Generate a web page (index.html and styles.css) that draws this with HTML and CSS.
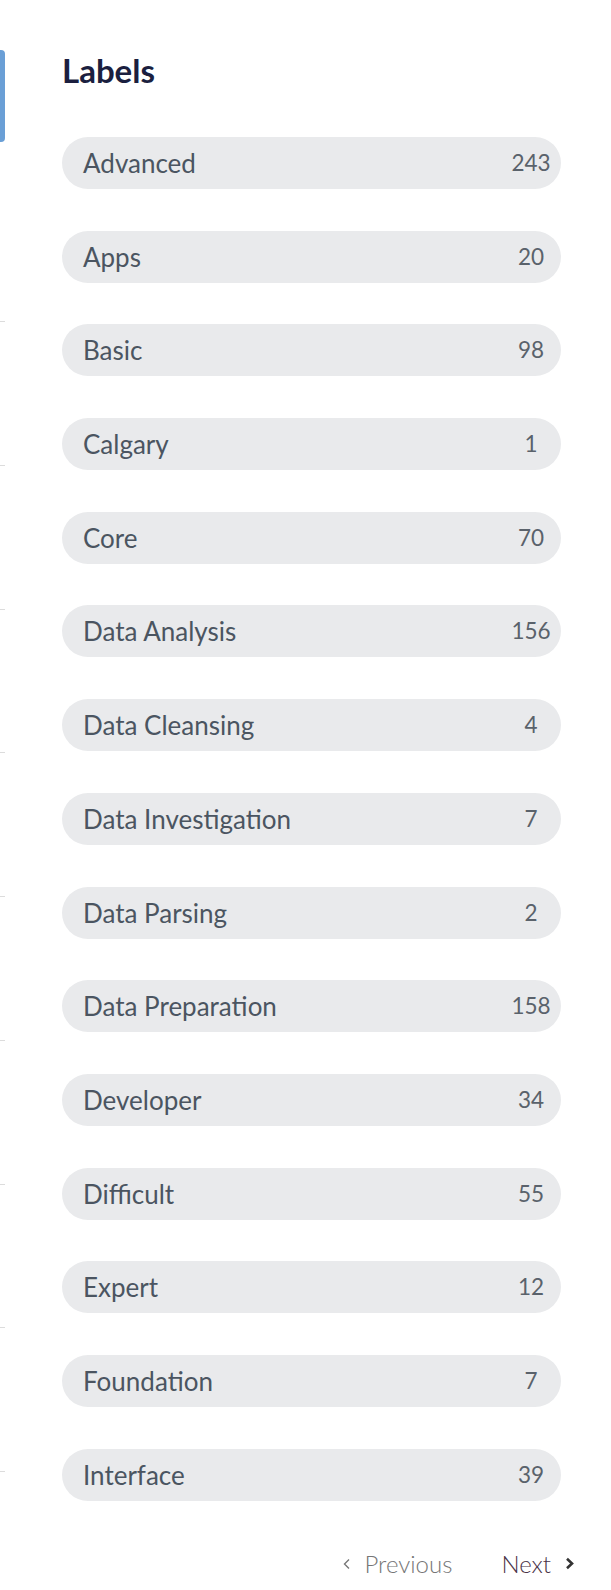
FILE: index.html
```html
<!DOCTYPE html>
<html>
<head>
<meta charset="utf-8">
<link rel="stylesheet" href="styles.css">
</head>
<body>
<div class="page">
  <div class="rail">
    <div class="rail-active"></div>
    <div class="rail-spacer"></div>
    <div class="rail-item"></div>
    <div class="rail-item"></div>
    <div class="rail-item"></div>
    <div class="rail-item"></div>
    <div class="rail-item"></div>
    <div class="rail-item"></div>
    <div class="rail-item"></div>
    <div class="rail-item"></div>
    <div class="rail-item"></div>
  </div>
  <div class="main">
    <h2 class="title">Labels</h2>
    <ul class="labels">
      <li class="pill"><span class="name">Advanced</span><span class="count">243</span></li>
      <li class="pill"><span class="name">Apps</span><span class="count">20</span></li>
      <li class="pill"><span class="name">Basic</span><span class="count">98</span></li>
      <li class="pill"><span class="name">Calgary</span><span class="count">1</span></li>
      <li class="pill"><span class="name">Core</span><span class="count">70</span></li>
      <li class="pill"><span class="name">Data Analysis</span><span class="count">156</span></li>
      <li class="pill"><span class="name">Data Cleansing</span><span class="count">4</span></li>
      <li class="pill"><span class="name">Data Investigation</span><span class="count">7</span></li>
      <li class="pill"><span class="name">Data Parsing</span><span class="count">2</span></li>
      <li class="pill"><span class="name">Data Preparation</span><span class="count">158</span></li>
      <li class="pill"><span class="name">Developer</span><span class="count">34</span></li>
      <li class="pill"><span class="name">Difficult</span><span class="count">55</span></li>
      <li class="pill"><span class="name">Expert</span><span class="count">12</span></li>
      <li class="pill"><span class="name">Foundation</span><span class="count">7</span></li>
      <li class="pill"><span class="name">Interface</span><span class="count">39</span></li>
    </ul>
    <div class="pager">
      <a class="prev">
        <svg class="chev" width="8" height="12" viewBox="0 0 8 12"><polyline points="6,1.5 1.5,6 6,10.5" fill="none" stroke="#777" stroke-width="1.4"/></svg>
        <span>Previous</span>
      </a>
      <a class="next">
        <span>Next</span>
        <svg class="chev" width="9" height="13" viewBox="0 0 9 13"><polyline points="2,1.8 7,6.5 2,11.2" fill="none" stroke="#333" stroke-width="2.6"/></svg>
      </a>
    </div>
  </div>
</div>
</body>
</html>
```
FILE: styles.css
```css
html, body {
  margin: 0;
  padding: 0;
  background: #ffffff;
}

body {
  font-family: Lato, "Noto Sans", "Liberation Sans", sans-serif;
}

.page {
  display: flex;
  align-items: flex-start;
  width: 611px;
  height: 1590px;
  overflow: hidden;
}

.rail {
  width: 5px;
  flex: none;
  display: flex;
  flex-direction: column;
}

.rail-active {
  margin-top: 50px;
  height: 92px;
  background: #6a9fd6;
  border-radius: 0 4px 4px 0;
}

.rail-spacer {
  height: 36.25px;
}

.rail-item {
  height: 142.75px;
  border-bottom: 1px solid #dcdcdc;
}

.main {
  margin-left: 57px;
  width: 499px;
  flex: none;
}

.title {
  margin: 50px 0 0;
  font-size: 33px;
  line-height: 40px;
  font-weight: 700;
  color: #1b1f3f;
}

.labels {
  list-style: none;
  margin: 47px 0 0;
  padding: 0;
  display: flex;
  flex-direction: column;
  gap: 41.7px;
}

.pill {
  height: 52px;
  border-radius: 26px;
  background: #e9eaec;
  display: flex;
  align-items: center;
  justify-content: space-between;
  padding: 0 8px 0 21px;
}

.name {
  font-size: 26px;
  line-height: 52px;
  color: #4b5561;
}

.count {
  width: 44px;
  text-align: center;
  font-size: 22.5px;
  line-height: 52px;
  color: #5a626b;
}

.pager {
  margin: 48px -13px 0 0;
  display: flex;
  justify-content: flex-end;
  align-items: center;
  gap: 49px;
  font-size: 24px;
  line-height: 30px;
  font-weight: 300;
}

.prev, .next {
  display: flex;
  align-items: center;
  gap: 14px;
}

.prev {
  color: #767676;
}

.next {
  color: #4a3347;
}

.chev {
  display: block;
}
```
